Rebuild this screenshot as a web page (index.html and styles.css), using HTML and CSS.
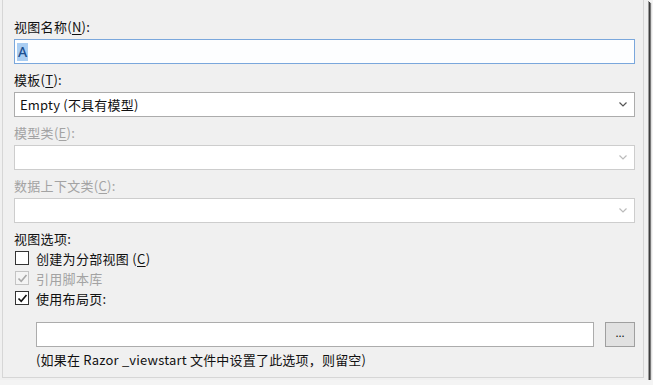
FILE: index.html
```html
<!DOCTYPE html>
<html lang="zh-CN">
<head>
<meta charset="utf-8">
<title>添加视图</title>
<link rel="stylesheet" href="styles.css">
</head>
<body>
<div class="window">
  <div class="pane">
    <div class="field">
      <div class="label">视图名称(<u>N</u>):</div>
      <div class="textbox focus"><span class="sel">A</span></div>
    </div>
    <div class="field">
      <div class="label">模板(<u>T</u>):</div>
      <div class="combo"><span class="value">Empty (不具有模型)</span><svg class="chev" width="8" height="5" viewBox="0 0 8 5"><path d="M0.5 0.5 L4 4 L7.5 0.5" fill="none" stroke="#555" stroke-width="1.2"/></svg></div>
    </div>
    <div class="field disabled">
      <div class="label">模型类(<u>E</u>):</div>
      <div class="combo"><span class="value"></span><svg class="chev" width="8" height="5" viewBox="0 0 8 5"><path d="M0.5 0.5 L4 4 L7.5 0.5" fill="none" stroke="#bbb" stroke-width="1.2"/></svg></div>
    </div>
    <div class="field disabled">
      <div class="label">数据上下文类(<u>C</u>):</div>
      <div class="combo"><span class="value"></span><svg class="chev" width="8" height="5" viewBox="0 0 8 5"><path d="M0.5 0.5 L4 4 L7.5 0.5" fill="none" stroke="#bbb" stroke-width="1.2"/></svg></div>
    </div>
    <div class="options">
      <div class="label">视图选项:</div>
      <div class="check"><span class="box"></span><span>创建为分部视图 (<u>C</u>)</span></div>
      <div class="check disabled"><span class="box"><svg width="11" height="11" viewBox="0 0 11 11"><path d="M1.5 5.5 L4.2 8.3 L9.5 2" fill="none" stroke="#a8a8a8" stroke-width="1.6"/></svg></span><span>引用脚本库</span></div>
      <div class="check"><span class="box"><svg width="11" height="11" viewBox="0 0 11 11"><path d="M1.5 5.5 L4.2 8.3 L9.5 2" fill="none" stroke="#111" stroke-width="1.6"/></svg></span><span>使用布局页:</span></div>
      <div class="layout-row">
        <div class="textbox wide"></div>
        <div class="browse">...</div>
      </div>
      <div class="note">(如果在 Razor _viewstart 文件中设置了此选项，则留空)</div>
    </div>
  </div>
</div>
</body>
</html>
```
FILE: styles.css
```css
* { box-sizing: border-box; }
body {
  margin: 0;
  background: #f4f4f4;
  font-family: "Noto Sans CJK SC", "Noto Sans", sans-serif;
  font-size: 13px;
  color: #111;
}
u { text-decoration: underline; text-underline-offset: 2px; }
.window {
  width: 648px;
  height: 380px;
  background: #f0f0f0;
  box-shadow: 1px 1px 0 #9a9a9a, 2px 2px 0 #3c3c3c, 3px 3px 1px #777;
}
.pane {
  margin-left: 2px;
  width: 642px;
  height: 378px;
  border-left: 1px solid #d6d6d6;
  border-right: 1px solid #d6d6d6;
  border-bottom: 1px solid #d6d6d6;
  padding: 17px 8px 0 11px;
  display: flex;
  flex-direction: column;
}
.field {
  display: flex;
  flex-direction: column;
  gap: 3px;
  margin-bottom: 6px;
}
.label {
  height: 19px;
  line-height: 19px;
  letter-spacing: 0.3px;
}
.disabled .label, .check.disabled { color: #a3a3a3; }
.textbox {
  height: 25px;
  background: #fff;
  border: 1px solid #acacac;
  padding: 2px 2px;
  display: flex;
  align-items: center;
}
.textbox.focus { border-color: #7aa7dc; background: #fdfeff; }
.sel {
  background: #a9cdf2;
  color: #1d4f8f;
  padding: 0 1px;
  line-height: 18px;
  font-size: 14px;
  font-weight: 500;
  font-family: "Noto Sans", sans-serif;
}
.combo {
  height: 25px;
  background: #fff;
  border: 1px solid #acacac;
  display: flex;
  align-items: center;
  justify-content: space-between;
  padding: 0 7px 0 5px;
  letter-spacing: 0.2px;
}
.disabled .combo { border-color: #cdcdcd; }
.chev { display: block; }
.options {
  display: flex;
  flex-direction: column;
  margin-top: 0;
}
.check {
  display: flex;
  align-items: center;
  gap: 7px;
  height: 20px;
  margin-left: 1px;
  letter-spacing: 0.3px;
}
.box {
  width: 14px;
  height: 14px;
  border: 1px solid #333;
  background: #fff;
  display: flex;
  align-items: center;
  justify-content: center;
}
.check.disabled .box { border-color: #c4c4c4; background: #f4f4f4; }
.layout-row {
  display: flex;
  gap: 11px;
  margin-top: 14px;
  padding-left: 22px;
}
.textbox.wide { flex: 1; }
.browse {
  width: 30px;
  height: 25px;
  background: #e1e1e1;
  border: 1px solid #9f9f9f;
  display: flex;
  align-items: center;
  justify-content: center;
  font-size: 11px;
  line-height: 1;
  padding-bottom: 4px;
}
.note {
  padding-left: 22px;
  margin-top: 3px;
  line-height: 19px;
  letter-spacing: 0.2px;
}
```
